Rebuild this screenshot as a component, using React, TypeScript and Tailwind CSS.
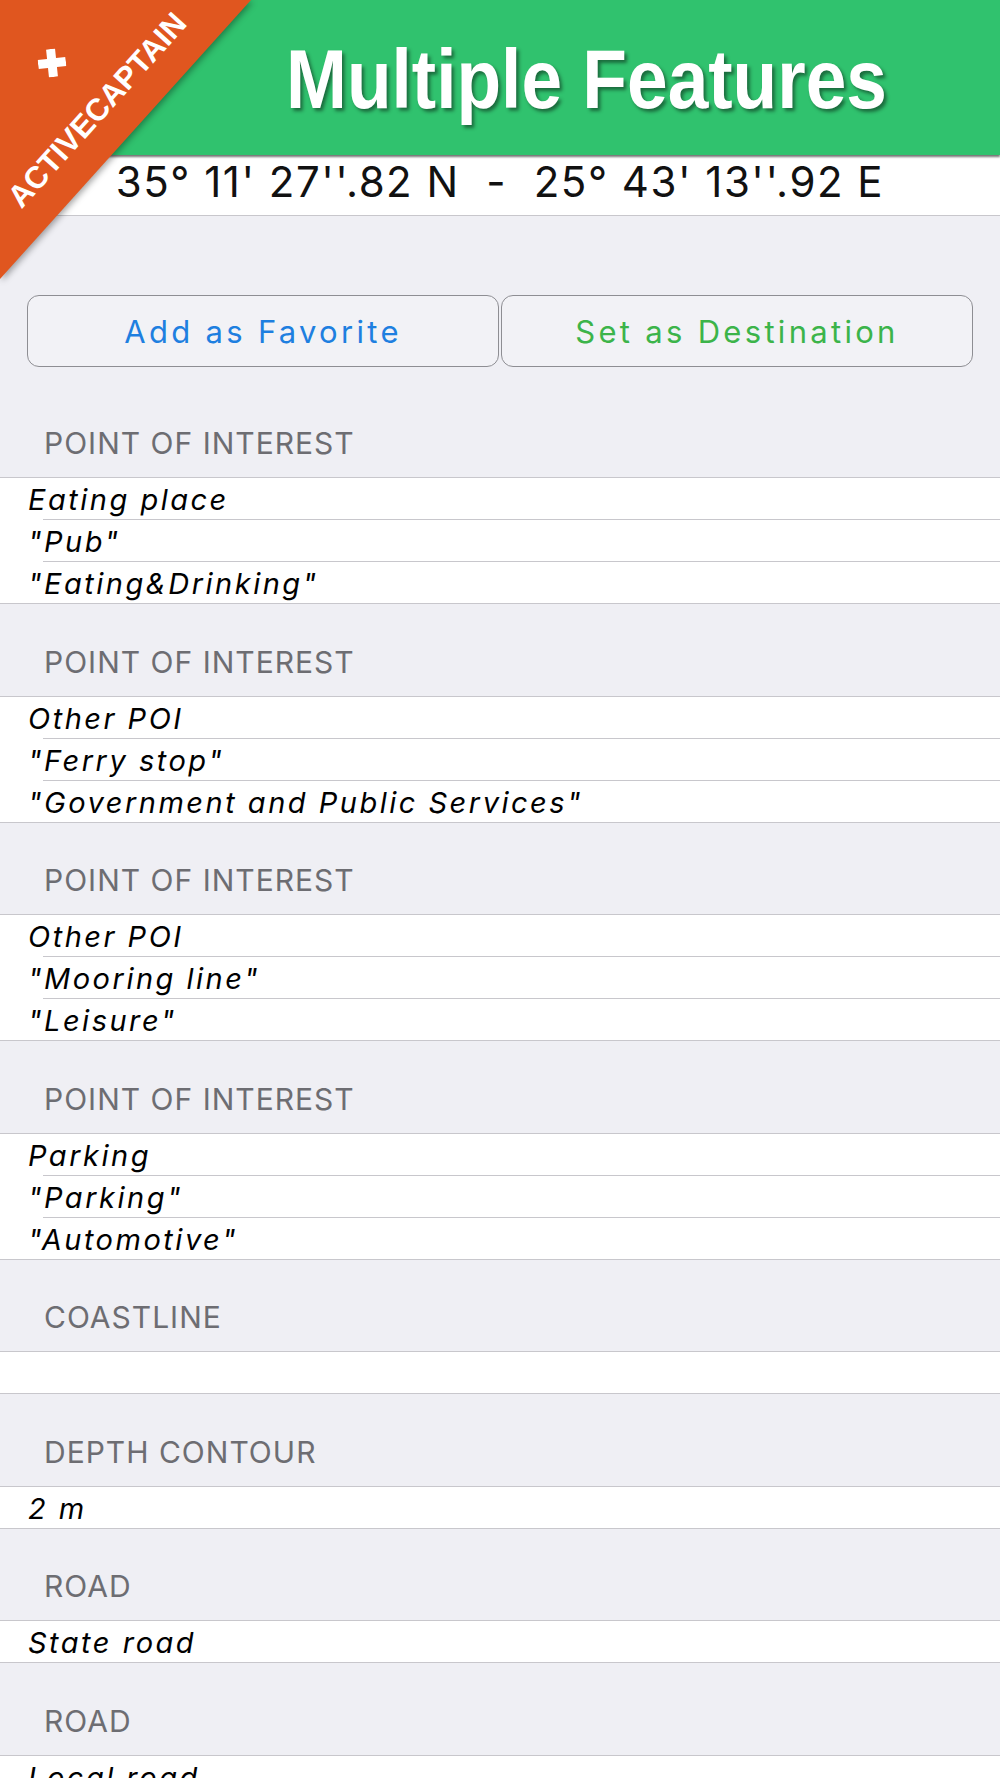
import React from "react";

type Section = { title: string; rows: string[] };

const sections: Section[] = [
  { title: "POINT OF INTEREST", rows: ["Eating place", '"Pub"', '"Eating&Drinking"'] },
  { title: "POINT OF INTEREST", rows: ["Other POI", '"Ferry stop"', '"Government and Public Services"'] },
  { title: "POINT OF INTEREST", rows: ["Other POI", '"Mooring line"', '"Leisure"'] },
  { title: "POINT OF INTEREST", rows: ["Parking", '"Parking"', '"Automotive"'] },
  { title: "COASTLINE", rows: [""] },
  { title: "DEPTH CONTOUR", rows: ["2 m"] },
  { title: "ROAD", rows: ["State road"] },
  { title: "ROAD", rows: ["Local road"] },
];

const UI = "font-['Inter','Liberation_Sans',sans-serif]";

function Ribbon() {
  return (
    <div className="absolute left-0 top-0 z-30 h-[290px] w-[260px] pointer-events-none">
      <svg
        width="260"
        height="290"
        viewBox="0 0 260 290"
        className="absolute left-0 top-0 drop-shadow-[2px_2px_3px_rgba(0,0,0,0.35)]"
      >
        <polygon points="0,0 251,0 0,279" fill="#e0561f" />
      </svg>
      <svg
        width="28"
        height="28"
        viewBox="0 0 28 28"
        className="absolute left-[38px] top-[49px] rotate-[-6deg]"
      >
        <path d="M9.5 0h9v9.5H28v9h-9.5V28h-9v-9.5H0v-9h9.5z" fill="#ffffff" />
      </svg>
      <div className="absolute left-[97px] top-[110px] -translate-x-1/2 -translate-y-1/2 rotate-[-48deg] whitespace-nowrap font-['Liberation_Sans',Arial,sans-serif] text-[31px] font-bold leading-none text-white">
        ACTIVECAPTAIN
      </div>
    </div>
  );
}

function SectionBlock({ s, first }: { s: Section; first: boolean }) {
  return (
    <div>
      <div
        className={`flex items-end pb-[19px] pl-[44px] ${first ? "h-[110px]" : "h-[91.5px]"}`}
      >
        <span className={`${UI} text-[30px] leading-none text-[#6d6d72] tracking-[1px]`}>
          {s.title}
        </span>
      </div>
      <div className="border-y border-[#c8c7cc] bg-white">
        {s.rows.map((r, i) => (
          <div key={i}>
            <div className="flex h-[41px] items-end pb-[5px] pl-[28px]">
              <span className={`${UI} italic text-[29px] leading-none text-black tracking-[2.5px] whitespace-pre`}>
                {r}
              </span>
            </div>
            {i < s.rows.length - 1 && (
              <div className="ml-[43px] h-px bg-[#c8c7cc]" />
            )}
          </div>
        ))}
      </div>
    </div>
  );
}

export default function App() {
  return (
    <div className="relative h-[1778px] w-[1000px] overflow-hidden bg-[#efeff4]">
      <Ribbon />
      <header className="relative z-20 h-[155px] bg-[#30c26e] shadow-[0_2px_2px_rgba(0,0,0,0.55)]">
        <div className="pl-[286px] pt-[37px]">
          <h1 className="inline-block origin-left scale-x-[0.87] whitespace-nowrap font-['Liberation_Sans',Arial,sans-serif] text-[84px] font-bold leading-none text-white [text-shadow:3px_3px_4px_rgba(0,0,0,0.45)]">
            Multiple Features
          </h1>
        </div>
      </header>
      <div className="relative z-10 flex h-[61px] items-end justify-center border-b border-[#c8c7cc] bg-white pb-[12px]">
        <span className={`${UI} whitespace-pre text-[42px] leading-none text-[#111] tracking-[1.5px]`}>
          {"35° 11' 27''.82 N  -  25° 43' 13''.92 E"}
        </span>
      </div>
      <div className="mt-[79px] flex gap-[2px] px-[27px]">
        <button className="flex h-[72px] flex-1 items-center justify-center rounded-[12px] border-[1.5px] border-[#8e8e93] bg-[#f2f2f6]">
          <span className={`${UI} text-[31px] leading-none text-[#1e7fe0] tracking-[3.3px]`}>
            Add as Favorite
          </span>
        </button>
        <button className="flex h-[72px] flex-1 items-center justify-center rounded-[12px] border-[1.5px] border-[#8e8e93] bg-[#f2f2f6]">
          <span className={`${UI} text-[31px] leading-none text-[#3cb44a] tracking-[3.3px]`}>
            Set as Destination
          </span>
        </button>
      </div>
      {sections.map((s, i) => (
        <SectionBlock key={i} s={s} first={i === 0} />
      ))}
    </div>
  );
}
